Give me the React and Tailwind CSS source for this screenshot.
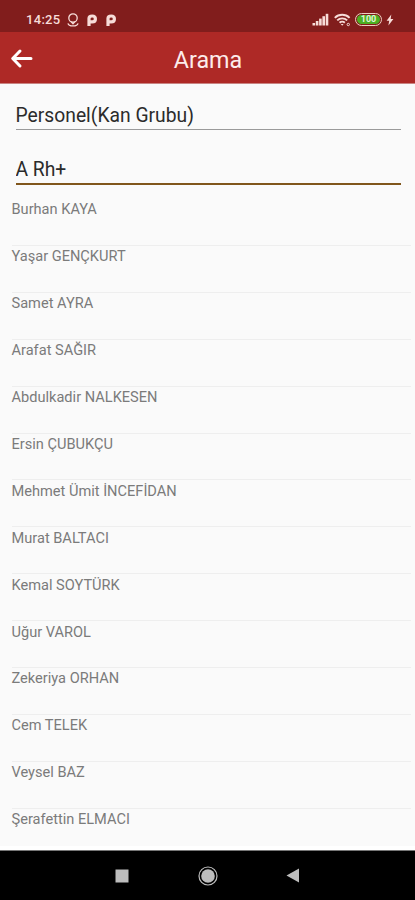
import { useState } from "react";

const people = [
  "Burhan KAYA",
  "Yaşar GENÇKURT",
  "Samet AYRA",
  "Arafat SAĞIR",
  "Abdulkadir NALKESEN",
  "Ersin ÇUBUKÇU",
  "Mehmet Ümit İNCEFİDAN",
  "Murat BALTACI",
  "Kemal SOYTÜRK",
  "Uğur VAROL",
  "Zekeriya ORHAN",
  "Cem TELEK",
  "Veysel BAZ",
  "Şerafettin ELMACI",
];

function ParkIcon() {
  return (
    <svg width="10" height="12" viewBox="0 0 10 12" fill="none" stroke="currentColor" strokeWidth="3.2" strokeLinejoin="round">
      <path d="M2 12V4.6C2 2.8 3.2 2 5.2 2c2 0 3.2 1.2 3.2 2.9S7.2 7.8 5.2 7.8H3" />
    </svg>
  );
}

function StatusBar() {
  return (
    <div className="h-8 shrink-0 bg-[#811d1c] text-[#f7dcd8] flex items-center justify-between pt-[7px] pl-[26px] pr-[21px]">
      <div className="flex items-center">
        <span className="w-[41px] text-[13px] leading-4 font-medium tracking-[0.3px]">14:25</span>
        <svg width="12" height="14" viewBox="0 0 12 14" fill="none" stroke="currentColor" strokeWidth="1.3">
          <circle cx="6" cy="5" r="4.2" />
          <path d="M4.2 8.8 6 10.8l1.8-2M1 10.4c.6 3.4 9.4 3.4 10 0" />
        </svg>
        <div className="flex gap-[9px] ml-[8px]">
          <ParkIcon />
          <ParkIcon />
        </div>
      </div>
      <div className="flex items-center">
        <svg width="17" height="13" viewBox="0 0 17 13" fill="currentColor">
          <rect x="0.5" y="10" width="2.6" height="2.5" />
          <rect x="3.8" y="8" width="2.6" height="4.5" />
          <rect x="7.1" y="5.6" width="2.6" height="6.9" />
          <rect x="10.4" y="3.2" width="2.6" height="9.3" />
          <rect x="13.7" y="0.8" width="2.6" height="11.7" />
        </svg>
        <svg className="ml-[5px]" width="17" height="14" viewBox="0 0 17 14" fill="none" stroke="currentColor" strokeWidth="1.9">
          <path d="M0.8 4.8a10.5 10.5 0 0 1 14.8 0M3.2 7.4a7.1 7.1 0 0 1 10 0M5.6 9.8a3.7 3.7 0 0 1 5.2 0" />
          <path d="M6.8 11h2.8l-1.4 1.8z" fill="currentColor" stroke="none" />
          <circle cx="14.3" cy="11.5" r="1.2" strokeWidth="1" />
        </svg>
        <div className="ml-[4px] w-[27px] h-[13px] rounded-full border-[1.5px] border-[#eccfc1] bg-[#811d1c] p-px">
          <div className="h-full rounded-full bg-[#4caf22] flex items-center justify-center text-[9px] leading-none font-bold text-[#e2f5d8]">100</div>
        </div>
        <svg className="ml-[4px]" width="8" height="12" viewBox="0 0 8 12" fill="currentColor">
          <path d="M5.3 0.5 0.6 6.7h2.6L2.4 11.5 7.4 5H4.7z" />
        </svg>
      </div>
    </div>
  );
}

function Header() {
  return (
    <header className="h-[52px] shrink-0 bg-[#ae2926] border-b border-[#c98482] text-white flex items-center px-[10px]">
      <button className="w-6 h-6" aria-label="Geri">
        <svg width="24" height="24" viewBox="0 0 24 24" fill="none" stroke="currentColor" strokeWidth="3" strokeLinecap="round" strokeLinejoin="round">
          <path d="M21 12.5H3M10 5 2.7 12.5 10 20" />
        </svg>
      </button>
      <h1 className="flex-1 text-center text-[23.3px] leading-7 pr-[23px] pt-[5px] text-[#fdeceb]">Arama</h1>
    </header>
  );
}

function NavBar() {
  return (
    <nav className="h-[50px] shrink-0 bg-black border-t border-[#777] text-[#bdbdbd] flex items-center pl-[115px]">
      <svg width="14" height="14" viewBox="0 0 14 14" fill="currentColor">
        <rect x="0.5" y="0.5" width="13" height="13" />
      </svg>
      <svg className="ml-[69px]" width="20" height="20" viewBox="0 0 20 20">
        <circle cx="10" cy="10" r="9" fill="none" stroke="currentColor" strokeWidth="1.2" />
        <circle cx="10" cy="10" r="6.8" fill="currentColor" />
      </svg>
      <svg className="ml-[68px]" width="14" height="15" viewBox="0 0 14 15" fill="currentColor">
        <path d="M13 0.5v14L0.5 7.5z" />
      </svg>
    </nav>
  );
}

export default function App() {
  const [category, setCategory] = useState("Personel(Kan Grubu)");
  const [query, setQuery] = useState("A Rh+");

  return (
    <div className="w-[415px] h-[900px] flex flex-col overflow-hidden bg-[#fafafa] font-[Roboto,sans-serif]">
      <StatusBar />
      <Header />
      <main className="flex-1 min-h-0 flex flex-col border-b-4 border-white">
        <div className="pl-[15.5px] pr-[14px] pt-[18px] text-[19.3px] text-[#2b2b2b]">
          <input
            value={category}
            onChange={(e) => setCategory(e.target.value)}
            className="block w-full h-[28px] pt-px border-b border-[#9a9a9a] outline-none"
          />
          <input
            value={query}
            onChange={(e) => setQuery(e.target.value)}
            className="block w-full h-[29px] mt-[26px] pb-px border-b-2 border-[#80561c] outline-none"
          />
        </div>
        <ul className="mt-[14px] pl-[11.5px] pr-1">
          {people.map((name) => (
            <li key={name} className="h-[46.92px] pt-[1.4px] border-b border-[#eeeeee] last:border-b-0 text-[14.6px] leading-[18px] text-[#7b7b7b]">
              {name}
            </li>
          ))}
        </ul>
      </main>
      <NavBar />
    </div>
  );
}
